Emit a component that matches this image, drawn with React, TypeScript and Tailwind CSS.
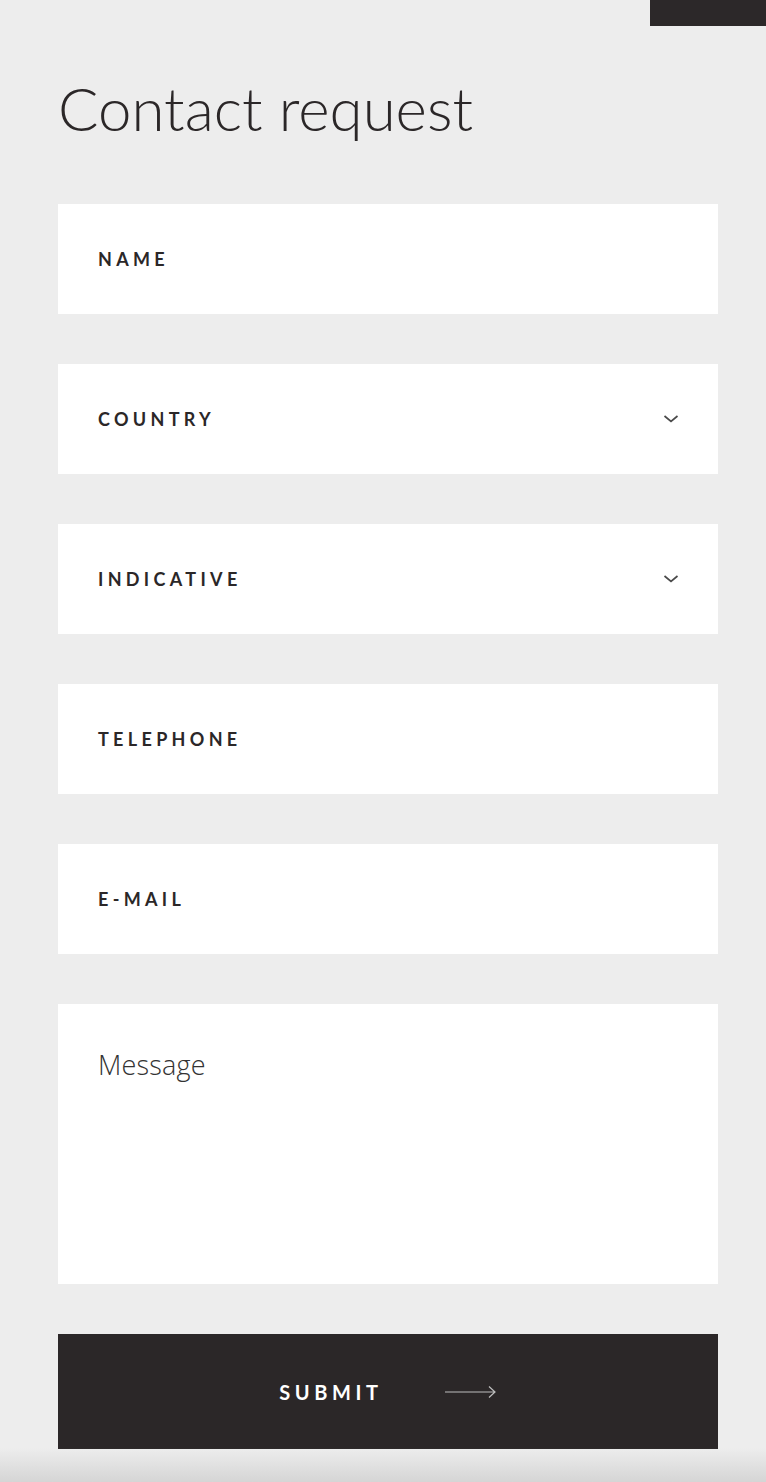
import React from 'react';

const fields = [
  { label: 'NAME', select: false },
  { label: 'COUNTRY', select: true },
  { label: 'INDICATIVE', select: true },
  { label: 'TELEPHONE', select: false },
  { label: 'E-MAIL', select: false },
];

const Chevron = () => (
  <svg width="16" height="10" viewBox="0 0 16 10" fill="none" className="text-[#4a4a4a]">
    <path d="M1.5 2l6.5 5.5 6.5-5.5" stroke="currentColor" strokeWidth="1.7" />
  </svg>
);

export default function App() {
  return (
    <div className="relative min-h-[1482px] bg-[#ededed] font-['Lato','Liberation_Sans',sans-serif] text-[#2b2728]">
      {/* top-right block */}
      <div className="flex justify-end">
        <div className="w-[116px] h-[26px] bg-[#2c2829]" />
      </div>

      <div className="pl-[58px] pr-[48px]">
        <h1 className="pt-[47px] text-[60px] leading-[70px] font-light text-[#2b2728]">
          Contact request
        </h1>

        <form className="mt-[61px] flex flex-col gap-[50px]">
          {fields.map(f => (
            <div key={f.label} className="h-[110px] bg-white flex items-center justify-between pl-[40px] pr-[39px]">
              <span className="text-[18px] font-bold tracking-[0.24em] text-[#2b2728]">{f.label}</span>
              {f.select && <Chevron />}
            </div>
          ))}

          <div className="h-[280px] bg-white pl-[40px] pt-[41px]">
            <span className="font-['Open_Sans',sans-serif] text-[27px] font-light tracking-[0.2px] text-[#333]">Message</span>
          </div>

          <button
            type="button"
            className="h-[115px] bg-[#2b2728] flex items-center justify-center gap-[62px]"
          >
            <span className="text-[20px] font-bold tracking-[0.23em] text-white">SUBMIT</span>
            <svg width="52" height="14" viewBox="0 0 52 14" fill="none" className="text-[#bdbdbd]">
              <path d="M0 7h50M44 1.5L50 7l-6 5.5" stroke="currentColor" strokeWidth="1.2" />
            </svg>
          </button>
        </form>
      </div>

      {/* bottom fade */}
      <div className="absolute left-0 right-0 bottom-0 h-[34px] bg-gradient-to-b from-[#ededed00] to-[#d5d5d5]" />
    </div>
  );
}
